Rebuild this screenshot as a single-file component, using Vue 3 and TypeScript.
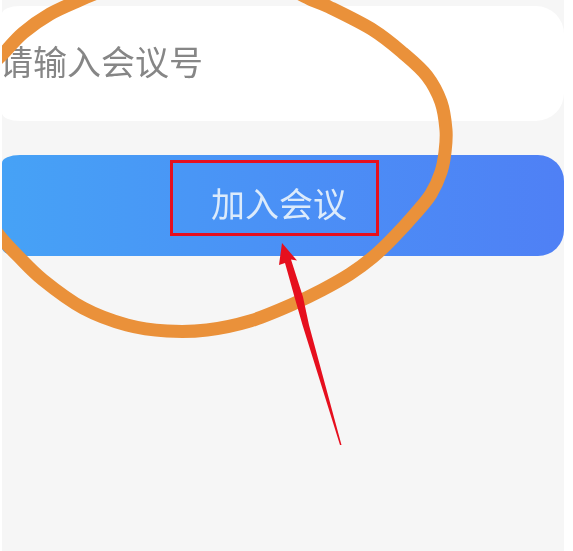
<script setup lang="ts">
type Pt = [number, number]

// 手绘圈的采样点（截图坐标），中段在画面上方被裁掉
const leftArc: Pt[] = [[-8, 64], [2, 55], [23, 33], [50, 14], [80, 0], [104, -10]]
const rightArc: Pt[] = [
  [296, -8], [312, 0], [329, 7], [373, 30], [403, 53], [427, 76], [441, 102], [446, 130], [445, 152],
  [441, 172], [431, 194], [415, 214], [393, 238], [373, 257], [350, 274], [322, 290], [293, 304],
  [250, 321], [207, 330], [167, 331], [127, 325], [83, 308], [43, 280], [18, 256], [2, 239], [-8, 226],
]

// Catmull-Rom 轉貝塞爾，讓筆畫順一點
function smooth(pts: Pt[]): string {
  let d = `M${pts[0][0]} ${pts[0][1]}`
  for (let i = 0; i < pts.length - 1; i++) {
    const a = pts[Math.max(i - 1, 0)]
    const b = pts[i]
    const c = pts[i + 1]
    const e = pts[Math.min(i + 2, pts.length - 1)]
    const c1x = b[0] + (c[0] - a[0]) / 6
    const c1y = b[1] + (c[1] - a[1]) / 6
    const c2x = c[0] - (e[0] - b[0]) / 6
    const c2y = c[1] - (e[1] - b[1]) / 6
    d += ` C${c1x.toFixed(1)} ${c1y.toFixed(1)} ${c2x.toFixed(1)} ${c2y.toFixed(1)} ${c[0]} ${c[1]}`
  }
  return d
}

const circlePath = `${smooth(leftArc)} ${smooth(rightArc)}`
</script>

<template>
  <div class="shot">
    <div class="room-id">
      <span class="placeholder">请输入会议号</span>
    </div>
    <button class="join-btn" type="button">加入会议</button>

    <!-- 手绘批注 -->
    <div class="red-box"></div>
    <svg class="marks" viewBox="0 0 562 551" width="562" height="551">
      <g transform="translate(-2 0)">
        <path class="circle" :d="circlePath" />
        <polygon
          class="arrow"
          points="282,243 297,260.5 291,259.5 303,297 309,325 341.5,445 340,445 302.5,325 294.5,297 285,263 279,265"
        />
      </g>
    </svg>
  </div>
</template>

<style scoped>
.shot {
  position: relative;
  box-sizing: border-box;
  width: 562px;
  height: 551px;
  margin-left: 2px;
  padding-top: 6px;
  overflow: hidden;
  background: #f6f6f6;
  font-family: "Liberation Sans", "Noto Sans CJK SC", sans-serif;
  filter: blur(0.5px);
}

.room-id {
  display: flex;
  align-items: center;
  height: 115px;
  border-radius: 18px 28px 28px 18px / 8px 28px 28px 8px;
  background: #ffffff;
}

.placeholder {
  margin-left: -3px;
  padding-bottom: 1px;
  font-size: 34px;
  line-height: 1;
  color: #868686;
}

.join-btn {
  display: block;
  box-sizing: border-box;
  width: 100%;
  height: 101px;
  margin-top: 34px;
  padding: 0 8px 1px 0;
  border: 0;
  border-radius: 18px 26px 26px 18px / 8px 26px 26px 8px;
  background: linear-gradient(90deg, #46a2f6 0%, #4a92f6 45%, #4f80f5 100%);
  font-family: inherit;
  font-size: 34px;
  line-height: 1;
  color: #dcebfb;
}

.red-box {
  position: absolute;
  top: 160px;
  left: 168px;
  box-sizing: border-box;
  width: 209px;
  height: 76px;
  border: 3px solid #e60f1e;
}

.marks {
  position: absolute;
  top: 0;
  left: 0;
}

.circle {
  fill: none;
  stroke: #ea913a;
  stroke-width: 13;
  stroke-linecap: round;
  stroke-linejoin: round;
}

.arrow {
  fill: #e60f1e;
}
</style>

<style>
html,
body {
  background: #ffffff;
}
</style>
